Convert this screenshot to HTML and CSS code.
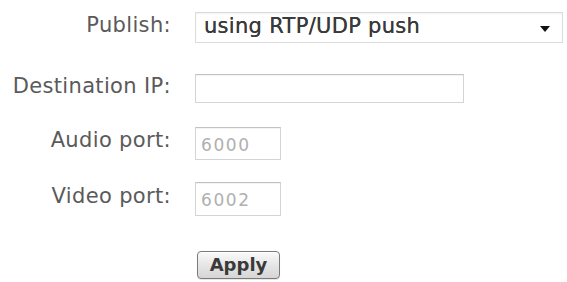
FILE: index.html
```html
<!DOCTYPE html>
<html>
<head>
<meta charset="utf-8">
<link rel="stylesheet" href="styles.css">
</head>
<body>
<form class="form">
  <div class="row row-publish">
    <label class="label">Publish:</label>
    <div class="select">
      <span class="select-text">using RTP/UDP push</span>
      <span class="arrow"></span>
    </div>
  </div>

  <div class="row row-ip">
    <label class="label">Destination IP:</label>
    <div class="input input-ip"></div>
  </div>

  <div class="row row-audio">
    <label class="label">Audio port:</label>
    <div class="input input-port"><span class="port-value">6000</span></div>
  </div>

  <div class="row row-video">
    <label class="label">Video port:</label>
    <div class="input input-port"><span class="port-value">6002</span></div>
  </div>

  <div class="row row-apply">
    <span></span>
    <div class="actions"><button type="button" class="btn">Apply</button></div>
  </div>
</form>
</body>
</html>
```

FILE: styles.css
```css
html, body {
  margin: 0;
  padding: 0;
  background: #ffffff;
}
body {
  font-family: "DejaVu Sans", Verdana, sans-serif;
  width: 567px;
  height: 282px;
  overflow: hidden;
}
.form {
  display: flex;
  flex-direction: column;
  padding-top: 12px;
}
.row {
  display: grid;
  grid-template-columns: 171px auto;
  column-gap: 24px;
  align-items: center;
}
.row-publish { height: 31px; }
.row-ip { height: 27px; margin-top: 31px; }
.row-audio { height: 33px; margin-top: 26px; }
.row-video { height: 34px; margin-top: 22px; }
.row-apply { height: 28px; margin-top: 35px; }

.label {
  font-size: 21px;
  letter-spacing: 0.35px;
  color: #5a5a5a;
  text-align: right;
  white-space: nowrap;
  padding-bottom: 5px;
}
.row-audio .label, .row-video .label { padding-bottom: 7px; }

.select {
  height: 31px;
  box-sizing: border-box;
  width: 368px;
  border: 1px solid #dcdcdc;
  box-shadow: inset 0 1px 2px rgba(0,0,0,0.06);
  display: flex;
  align-items: center;
  justify-content: space-between;
  padding: 0 12px 0 8px;
  background: #fff;
}
.select-text {
  font-size: 21px;
  letter-spacing: 0.3px;
  color: #3a3a3a;
  text-shadow: 0 0 0.5px #3a3a3a;
  padding-bottom: 3px;
  white-space: nowrap;
}
.arrow {
  width: 0;
  height: 0;
  border-left: 5px solid transparent;
  border-right: 5px solid transparent;
  border-top: 6px solid #111;
  margin-top: 3px;
}
.input {
  border: 1px solid #d4d4d4;
  border-top-color: #c2c2c2;
  box-shadow: inset 0 1px 1px rgba(0,0,0,0.05);
  background: #fff;
  box-sizing: border-box;
  display: flex;
  align-items: center;
  height: 100%;
}
.input-ip {
  width: 269px;
}
.input-port {
  width: 86px;
  padding-left: 5px;
}
.port-value {
  font-size: 17px;
  letter-spacing: 1.6px;
  color: #b0b0b0;
  padding-top: 2px;
}
.actions {
  display: flex;
  height: 100%;
}
.btn {
  font-family: "DejaVu Sans", Verdana, sans-serif;
  font-size: 18px;
  font-weight: bold;
  color: #3a3a3a;
  width: 83px;
  height: 28px;
  margin-left: 2px;
  border: 1px solid #7a7a7a;
  border-radius: 4px;
  background: linear-gradient(#fafafa, #e4e4e4 55%, #d6d6d6);
  box-shadow: inset 0 1px 0 #ffffff, 0 1px 1px rgba(0,0,0,0.1);
  padding: 0 0 2px 0;
}
```
